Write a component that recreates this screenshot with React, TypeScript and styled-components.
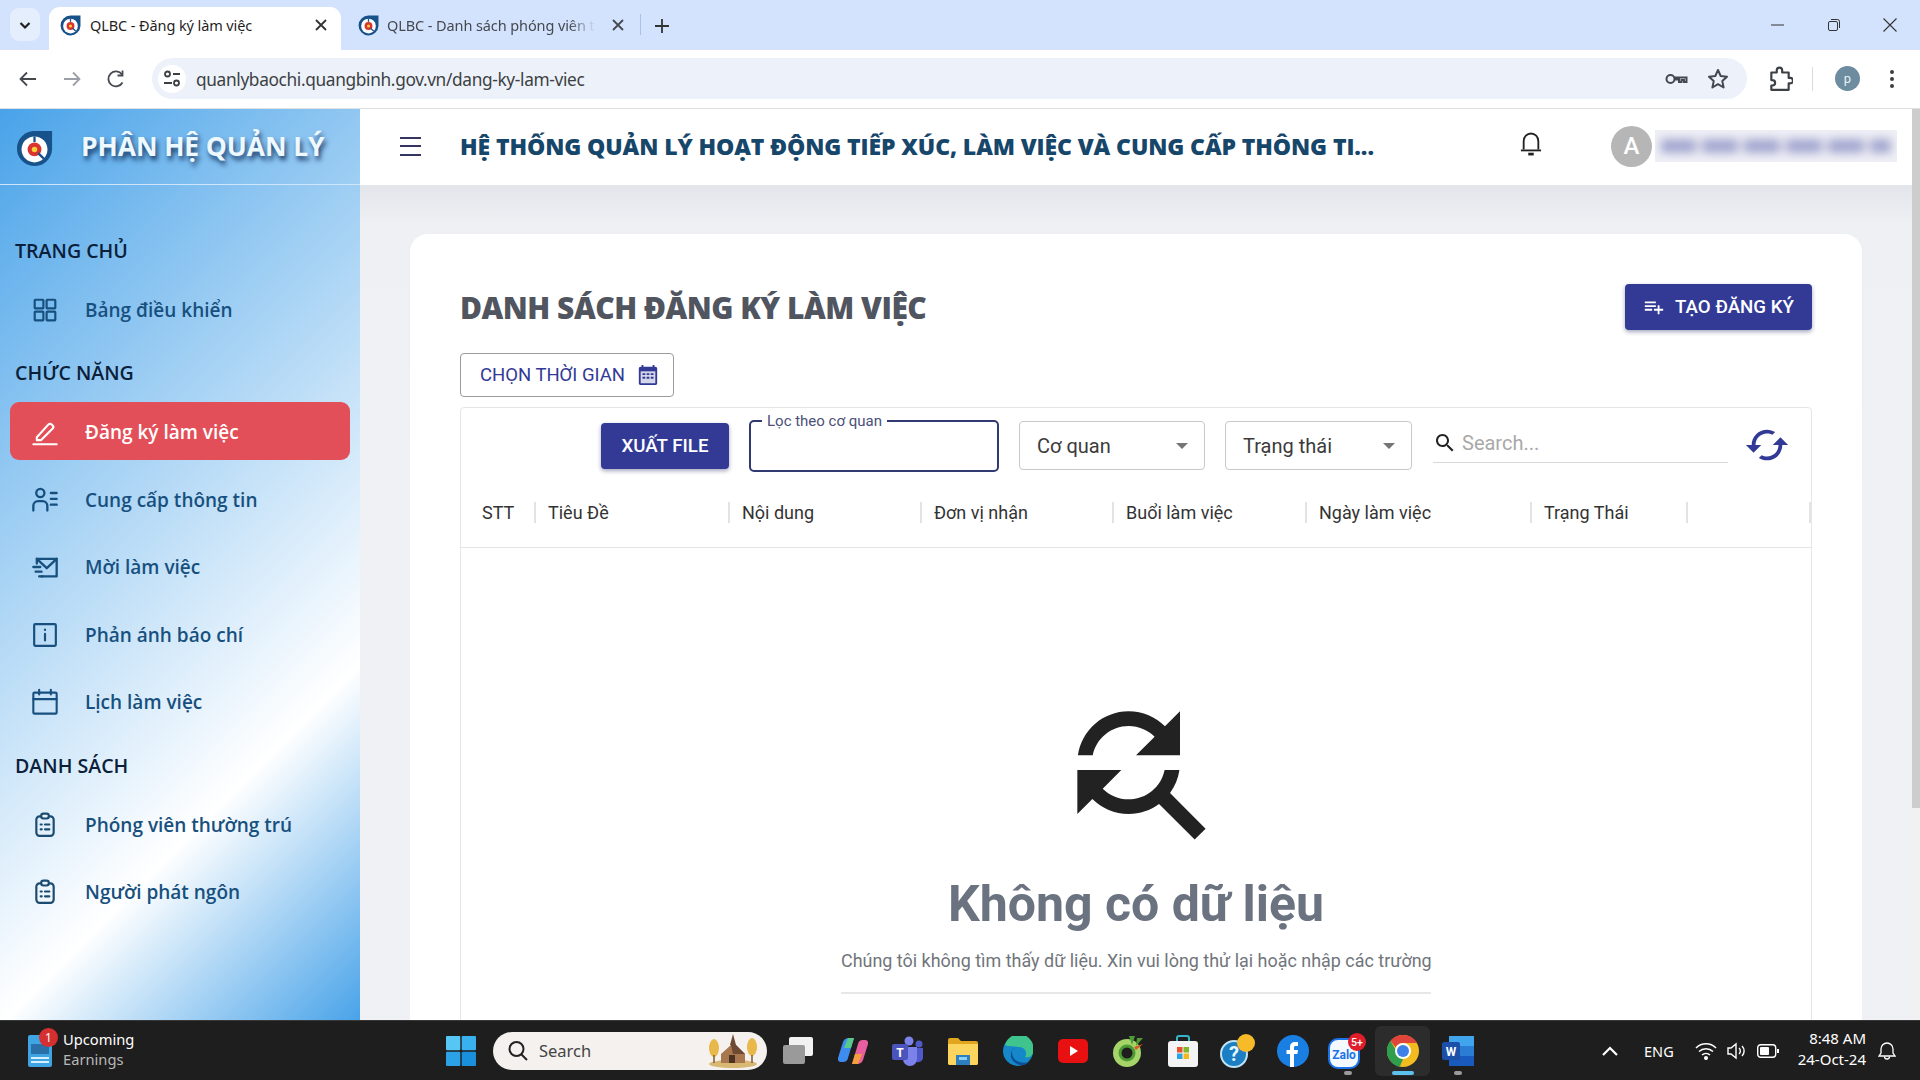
import React from "react";
import styled, { createGlobalStyle } from "styled-components";

const GlobalStyle = createGlobalStyle`
  html, body { margin: 0; height: 100%; overflow: hidden; background: #fff; }
  #root { height: 100%; }
  * { box-sizing: border-box; }
  body { font-family: Roboto, "Liberation Sans", sans-serif; }
`;

const Screen = styled.div`
  display: flex;
  flex-direction: column;
  width: 1920px;
  height: 1080px;
`;

/* ---------- browser chrome ---------- */
const TabStrip = styled.div`
  height: 50px;
  flex: none;
  display: flex;
  align-items: flex-end;
  background: #d3e3fd;
  padding-left: 10px;
  font-family: "Noto Sans", "Open Sans", sans-serif;
`;
const TabListButton = styled.div`
  width: 30px;
  height: 33px;
  margin: 0 9px 9px 0;
  border-radius: 9px;
  background: #e4eefd;
  display: flex;
  align-items: center;
  justify-content: center;
`;
const ActiveTab = styled.div`
  width: 292px;
  height: 43px;
  border-radius: 11px 11px 0 0;
  background: #fff;
  display: flex;
  align-items: center;
  padding: 0 14px 7px 11px;
  gap: 9px;
  color: #1f1f1f;
`;
const InactiveTab = styled.div`
  width: 299px;
  height: 43px;
  display: flex;
  align-items: center;
  padding: 0 16px 7px 17px;
  gap: 8px;
  color: #45494f;
`;
const TabTitle = styled.span`
  flex: 1;
  font-size: 14.5px;
  white-space: nowrap;
  letter-spacing: -0.1px;
`;
const TabFade = styled(TabTitle)`
  -webkit-mask-image: linear-gradient(to right, #000 84%, transparent 96%);
  mask-image: linear-gradient(to right, #000 84%, transparent 96%);
`;
const TabSeparator = styled.div`
  width: 1px;
  height: 21px;
  margin-bottom: 15px;
  background: #a9c1e4;
`;
const NewTab = styled.div`
  margin: 0 0 16px 13px;
  display: flex;
`;
const WindowControls = styled.div`
  margin-left: auto;
  align-self: flex-start;
  display: flex;
  padding: 17px 22px 0 0;
  gap: 40px;
`;
const ToolBar = styled.div`
  height: 59px;
  flex: none;
  display: flex;
  align-items: center;
  background: #fff;
  border-bottom: 1px solid #dfe1e5;
  padding: 0 14px 1px 16px;
`;
const NavIcons = styled.div`
  display: flex;
  gap: 20px;
  width: 136px;
  flex: none;
`;
const Omnibox = styled.div`
  width: 1595px;
  height: 41px;
  flex: none;
  border-radius: 21px;
  background: #edf2fa;
  display: flex;
  align-items: center;
  padding: 0 17px 0 6px;
`;
const TuneChip = styled.div`
  width: 28px;
  height: 28px;
  border-radius: 50%;
  background: #fff;
  display: flex;
  align-items: center;
  justify-content: center;
  margin-right: 10px;
`;
const UrlText = styled.span`
  flex: 1;
  padding-top: 2px;
  font-size: 17.3px;
  color: #3c4043;
  font-family: "Noto Sans", sans-serif;
  letter-spacing: -0.35px;
`;
const OmniIcons = styled.div`
  display: flex;
  align-items: center;
  gap: 18px;
`;
const ToolRight = styled.div`
  display: flex;
  align-items: center;
  margin-left: 20px;
`;
const ToolDivider = styled.div`
  width: 1px;
  height: 24px;
  background: #d8dce2;
  margin: 0 22px 0 19px;
`;
const ProfileChip = styled.div`
  width: 25px;
  height: 25px;
  border-radius: 50%;
  background: #6d8c9f;
  color: #eaf1f5;
  font-size: 13px;
  display: flex;
  align-items: center;
  justify-content: center;
  margin-right: 29px;
`;

/* ---------- application ---------- */
const Workspace = styled.div`
  flex: 1;
  min-height: 0;
  display: flex;
  overflow: hidden;
`;
const Sidebar = styled.aside`
  width: 360px;
  flex: none;
  background: linear-gradient(135deg, #49a3e9 0%, #ffffff 72%, #49a3e9 100%);
  font-family: "Open Sans", "Noto Sans", sans-serif;
`;
const Brand = styled.div`
  height: 76px;
  display: flex;
  align-items: center;
  gap: 28px;
  padding: 0 0 2px 16px;
  border-bottom: 1px solid #cfe6fa;
`;
const BrandLogo = styled.span`
  display: flex;
  margin-top: 6px;
`;
const BrandName = styled.span`
  font-size: 26.5px;
  font-weight: 700;
  color: #eef8ff;
  white-space: nowrap;
  letter-spacing: -0.1px;
  text-shadow: 2px 4px 5px rgba(0, 28, 70, 0.8);
`;
const SideNav = styled.nav`
  display: flex;
  flex-direction: column;
  padding: 45px 10px 0;
`;
const SectionLabel = styled.div<{ $top?: number }>`
  height: 40px;
  display: flex;
  align-items: center;
  padding-left: 5px;
  font-size: 19.6px;
  font-weight: 600;
  color: #0b1f3a;
  margin-top: ${(p) => p.$top ?? 0}px;
  white-space: nowrap;
`;
const NavItem = styled.div<{ $active?: boolean; $gap?: number }>`
  height: 58px;
  display: flex;
  align-items: center;
  gap: 24px;
  padding: ${(p) => (p.$active ? "2px" : "0")} 0 0 18px;
  margin-top: ${(p) => p.$gap ?? 0}px;
  border-radius: 9px;
  font-size: 19px;
  font-weight: 600;
  color: ${(p) => (p.$active ? "#fff" : "#17507e")};
  background: ${(p) => (p.$active ? "#e34f59" : "transparent")};
  white-space: nowrap;
`;
const NavIconSlot = styled.span`
  width: 33px;
  height: 33px;
  flex: none;
  display: flex;
  align-items: center;
  justify-content: center;
`;
const Main = styled.main`
  flex: 1;
  min-width: 0;
  display: flex;
  flex-direction: column;
`;
const Header = styled.header`
  height: 76px;
  flex: none;
  display: flex;
  align-items: center;
  background: #fff;
  padding: 0 0 2px 40px;
`;
const Burger = styled.div`
  width: 21px;
  height: 19px;
  flex: none;
  margin-right: 39px;
  display: flex;
  flex-direction: column;
  justify-content: space-between;
  & > i {
    display: block;
    height: 2px;
    background: #34365e;
  }
`;
const HeaderTitle = styled.h1`
  width: 1060px;
  flex: none;
  margin: 0;
  font-family: "Open Sans", "Noto Sans", sans-serif;
  font-size: 23px;
  font-weight: 800;
  color: #17466b;
  white-space: nowrap;
  letter-spacing: -0.1px;
`;
const BellSlot = styled.div`
  width: 91px;
  flex: none;
  display: flex;
  margin-bottom: 4px;
`;
const Avatar = styled.div`
  width: 41px;
  height: 41px;
  flex: none;
  border-radius: 50%;
  background: #b6b6b6;
  color: #fff;
  font-size: 24px;
  font-weight: 500;
  display: flex;
  align-items: center;
  justify-content: center;
  margin-right: 3px;
`;
const BlurredName = styled.div`
  width: 242px;
  height: 32px;
  flex: none;
  background: #eff0f6;
  display: flex;
  align-items: center;
  overflow: hidden;
  & > i {
    display: block;
    width: 100%;
    height: 14px;
    margin: 0 6px;
    filter: blur(5px);
    background: repeating-linear-gradient(to right, #a4a7d0 0 34px, #dcdcea 34px 42px);
  }
`;
const Content = styled.div`
  flex: 1;
  min-height: 0;
  background: linear-gradient(to bottom, #e2e5ea 0, #eef0f4 40px, #eff1f5 100%);
  padding: 49px 50px 0;
  overflow: hidden;
`;
const Card = styled.section`
  background: #fff;
  border-radius: 18px;
  padding: 50px 50px 40px;
  height: 1100px;
`;
const TitleRow = styled.div`
  height: 46px;
  display: flex;
  align-items: center;
  justify-content: space-between;
`;
const PageTitle = styled.h2`
  margin: 0;
  font-family: "Open Sans", "Noto Sans", sans-serif;
  font-size: 30px;
  font-weight: 800;
  color: #50555f;
  letter-spacing: -0.5px;
`;
const PrimaryButton = styled.button<{ $w: number }>`
  width: ${(p) => p.$w}px;
  height: 46px;
  flex: none;
  border: 0;
  border-radius: 4px;
  background: #323a96;
  color: #fff;
  font: 500 18.7px Roboto, sans-serif;
  display: flex;
  align-items: center;
  justify-content: center;
  gap: 10px;
  box-shadow: 0 2px 4px rgba(30, 35, 90, 0.4);
`;
const DateButton = styled.button`
  width: 214px;
  height: 44px;
  margin-top: 23px;
  border: 1px solid #9b9b9b;
  border-radius: 4px;
  background: #fff;
  color: #323a96;
  font: 400 18.5px Roboto, sans-serif;
  display: flex;
  align-items: center;
  justify-content: center;
  gap: 12px;
  padding: 0 0 0 5px;
`;
const TablePanel = styled.div`
  margin-top: 10px;
  border: 1px solid #e6e6e6;
  border-radius: 4px;
  height: 900px;
`;
const FilterRow = styled.div`
  display: flex;
  align-items: flex-start;
  gap: 20px;
  padding: 15px 0 0 140px;
  height: 73px;
`;
const FieldOutline = styled.fieldset`
  width: 250px;
  height: 59px;
  margin: -10px 0 0;
  padding: 0 0 0 11px;
  border: 2px solid #323a72;
  border-radius: 5px;
  flex: none;
`;
const FieldLegend = styled.legend`
  padding: 0 5px;
  font-size: 15px;
  line-height: 16px;
  color: #4b5078;
`;
const SelectBox = styled.div<{ $w: number }>`
  width: ${(p) => p.$w}px;
  height: 49px;
  flex: none;
  margin-top: -2px;
  border: 1px solid #c9c9c9;
  border-radius: 4px;
  display: flex;
  align-items: center;
  justify-content: space-between;
  padding: 0 16px 0 17px;
  font-size: 20px;
  color: #3b3b3b;
`;
const Caret = styled.span`
  width: 0;
  height: 0;
  border-left: 6px solid transparent;
  border-right: 6px solid transparent;
  border-top: 6px solid #757575;
`;
const SearchBox = styled.div`
  width: 295px;
  height: 40px;
  flex: none;
  margin-left: 1px;
  border-bottom: 1px solid #d8d8d8;
  display: flex;
  align-items: center;
  gap: 5px;
  font-size: 20px;
  color: #a9a9a9;
`;
const RefreshSlot = styled.div`
  flex: none;
  margin: -1px 0 0 -4px;
  display: flex;
`;
const HeadRow = styled.div`
  display: grid;
  grid-template-columns: 73px 194px 192px 192px 193px 225px 156px 123px 1px;
  align-items: center;
  height: 67px;
  padding-bottom: 4px;
  border-bottom: 1px solid #e4e4e4;
  font-size: 18px;
  color: #333;
`;
const HeadCell = styled.div<{ $plain?: boolean }>`
  height: 21px;
  line-height: 21px;
  white-space: nowrap;
  border-left: ${(p) => (p.$plain ? "0" : "2px solid #e3e3e3")};
  padding-left: ${(p) => (p.$plain ? 21 : 12)}px;
`;
const EmptyState = styled.div`
  display: flex;
  flex-direction: column;
  align-items: center;
  padding-top: 134px;
`;
const EmptyTitle = styled.div`
  margin-top: 18px;
  font-size: 50px;
  font-weight: 700;
  line-height: 56px;
  color: #6b7280;
`;
const EmptyText = styled.div`
  width: 590px;
  margin-top: 17px;
  padding-bottom: 19px;
  border-bottom: 2px solid #e7e7e7;
  font-size: 17.95px;
  line-height: 24px;
  color: #71757b;
  text-align: center;
  white-space: nowrap;
`;
const ScrollTrack = styled.div`
  width: 8px;
  flex: none;
  background: #f1f1f1;
  & > i {
    display: block;
    height: 699px;
    background: #cdcdcd;
  }
`;

/* ---------- taskbar ---------- */
const Taskbar = styled.footer`
  height: 60px;
  flex: none;
  background: #1f1e1e;
  border-top: 1px solid #383838;
  display: flex;
  align-items: center;
  color: #fff;
  font-family: "Noto Sans", "Open Sans", sans-serif;
`;
const Widget = styled.div`
  width: 446px;
  flex: none;
  padding-left: 28px;
  display: flex;
  align-items: center;
  gap: 11px;
`;
const WidgetIcon = styled.div`
  position: relative;
  width: 24px;
  height: 32px;
  flex: none;
  display: flex;
`;
const Badge = styled.span`
  position: absolute;
  top: -7px;
  left: 11px;
  width: 19px;
  height: 19px;
  border-radius: 50%;
  background: #d62f2f;
  font-size: 12px;
  display: flex;
  align-items: center;
  justify-content: center;
`;
const WidgetText = styled.div`
  font-size: 14.7px;
  line-height: 20px;
  margin-bottom: 4px;
  & > small {
    display: block;
    font-size: 14.7px;
    color: #b8b8b8;
  }
`;
const SearchPill = styled.div`
  width: 274px;
  height: 38px;
  flex: none;
  margin: 0 3px 0 17px;
  border-radius: 19px;
  background: #f4f1ee;
  color: #444;
  font-size: 16.5px;
  display: flex;
  align-items: center;
  gap: 10px;
  padding: 0 7px 0 14px;
  & > span {
    flex: 1;
  }
`;
const TaskIcon = styled.div<{ $active?: boolean; $dot?: boolean; $bar?: boolean }>`
  position: relative;
  width: 55px;
  height: 50px;
  flex: none;
  display: flex;
  align-items: center;
  justify-content: center;
  border-radius: 6px;
  background: ${(p) => (p.$active ? "#2c2c2c" : "transparent")};
  &::after {
    content: "";
    display: ${(p) => (p.$dot || p.$bar ? "block" : "none")};
    position: absolute;
    bottom: 1px;
    left: 50%;
    transform: translateX(-50%);
    width: ${(p) => (p.$bar ? 22 : 8)}px;
    height: 4px;
    border-radius: 2px;
    background: ${(p) => (p.$bar ? "#5cc1ec" : "#9a9a9a")};
  }
`;
const Tray = styled.div`
  margin-left: auto;
  display: flex;
  align-items: center;
  padding-right: 24px;
  font-size: 14.5px;
`;
const Lang = styled.span`
  margin: 0 21px 0 25px;
`;
const TrayIcons = styled.div`
  display: flex;
  align-items: center;
  gap: 10px;
  margin-right: 19px;
`;
const Clock = styled.div`
  text-align: right;
  font-size: 15px;
  line-height: 21px;
  margin: 0 12px 3px 0;
`;

/* ---------- drawings ---------- */
const Logo = ({ s }: { s: number }) => (
  <svg width={s} height={s} viewBox="0 0 40 40">
    <path d="M20 1h19v20a19 19 0 1 1-19-20z" fill="#17528a" />
    <circle cx="20" cy="21" r="14" fill="#fff" />
    <circle cx="20" cy="21" r="7.500" fill="#d9342f" />
    <path d="M20 7v6" stroke="#17528a" strokeWidth="2.500" />
    <circle cx="20" cy="21" r="3" fill="#f6cf3a" />
    <path d="M24 25l6 6" stroke="#17528a" strokeWidth="2.500" />
  </svg>
);
const Mat = ({ d, s, c }: { d: string; s: number; c: string }) => (
  <svg width={s} height={s} viewBox="0 0 24 24" fill={c}>
    <path d={d} />
  </svg>
);
const Line = ({ s, c = "#17507e", w = 2, children, vb = 24 }: { s: number; c?: string; w?: number; children: React.ReactNode; vb?: number }) => (
  <svg width={s} height={s} viewBox={`0 0 ${vb} ${vb}`} fill="none" stroke={c} strokeWidth={w} strokeLinecap="round" strokeLinejoin="round">
    {children}
  </svg>
);
const M = {
  search: "M15.5 14h-.79l-.28-.27C15.41 12.590 16 11.110 16 9.500 16 5.910 13.090 3 9.500 3S3 5.910 3 9.500 5.910 16 9.500 16c1.610 0 3.090-.59 4.230-1.570l.27.28v.79l5 4.990L20.490 19l-4.990-5zm-6 0C7.010 14 5 11.990 5 9.500S7.010 5 9.500 5 14 7.010 14 9.500 11.990 14 9.500 14z",
  playlist: "M14 10H2v2h12v-2zm0-4H2v2h12V6zm4 8v-4h-2v4h-4v2h4v4h2v-4h4v-2h-4zM2 16h8v-2H2v2z",
  cached: "M19 8l-4 4h3c0 3.310-2.690 6-6 6-1.010 0-1.970-.25-2.800-.7l-1.460 1.460C8.970 19.540 10.430 20 12 20c4.420 0 8-3.580 8-8h3l-4-4zM6 12c0-3.310 2.690-6 6-6 1.010 0 1.970.25 2.800.7l1.460-1.460C15.030 4.460 13.570 4 12 4c-4.420 0-8 3.580-8 8H1l4 4 4-4H6z",
  find: "M11 6c1.380 0 2.630.56 3.540 1.460L12 10h6V4l-2.050 2.050C14.680 4.780 12.930 4 11 4c-3.530 0-6.430 2.610-6.920 6H6.100c.46-2.280 2.480-4 4.900-4zm5.640 9.140c.66-.9 1.120-1.970 1.280-3.140H15.900c-.46 2.280-2.480 4-4.900 4-1.380 0-2.630-.56-3.540-1.460L10 12H4v6l2.050-2.050C7.320 17.220 9.070 18 11 18c1.550 0 2.980-.51 4.140-1.360L20 21.490 21.490 20l-4.850-4.860z",
};
const CalendarFilled = () => (
  <svg width="22" height="24" viewBox="0 0 24 24" fill="#323a96">
    <path d="M20 3h-1V1h-2v2H7V1H5v2H4c-1.100 0-2 .9-2 2v16c0 1.100.9 2 2 2h16c1.100 0 2-.9 2-2V5c0-1.100-.9-2-2-2z" />
    <path d="M4 8h16v13H4z" fill="#fff" opacity=".8" />
    <path d="M6 10h3v2H6zm4.500 0h3v2h-3zm4.500 0h3v2h-3zM6 14h3v2H6zm4.500 0h3v2h-3zm4.500 0h3v2h-3z" />
  </svg>
);
const IconGrid = () => (
  <Line s={26}>
    <rect x="2.500" y="2.500" width="8" height="8" rx=".5" /><rect x="13.500" y="2.500" width="8" height="8" rx=".5" />
    <rect x="2.500" y="13.500" width="8" height="8" rx=".5" /><rect x="13.500" y="13.500" width="8" height="8" rx=".5" />
  </Line>
);
const IconPen = () => (
  <Line s={28} c="#fff" w={1.800}>
    <path d="M5 16.500L15 5.500a1.800 1.800 0 0 1 2.600 0l1 1a1.800 1.800 0 0 1 0 2.500L8.500 19H5z" /><path d="M2 22.500h20" />
  </Line>
);
const IconPersonList = () => (
  <Line s={28}>
    <circle cx="8" cy="6" r="3.500" /><path d="M2 21v-4a4 4 0 0 1 4-4h4a4 4 0 0 1 4 4v4" /><path d="M17 6h5M17 11h5M17 16h5" />
  </Line>
);
const IconMail = () => (
  <Line s={28}>
    <path d="M5 9V5h17v15H9" /><path d="M5 5l8.500 8L22 5" /><path d="M2 12h6M4 16h5M7 20h3" />
  </Line>
);
const IconInfo = () => (
  <Line s={26}>
    <rect x="2" y="2" width="20" height="20" rx="1" /><path d="M12 11v6" /><path d="M12 7v.4" />
  </Line>
);
const IconCal = () => (
  <Line s={28} w={1.800}>
    <rect x="2" y="4" width="20" height="18" rx="1" /><path d="M2 9.500h20M7 1.500v4M17 1.500v4" />
  </Line>
);
const IconClip = () => (
  <Line s={26} c="#1b4b70">
    <rect x="4" y="4" width="16" height="18" rx="3" /><rect x="8.500" y="1.500" width="7" height="4.500" rx="2" fill="#e8f2fb" />
    <path d="M8 11.500h1M12 11.500h4M8 16h1M12 16h4" />
  </Line>
);
const Bell = () => (
  <svg width="22" height="28" viewBox="0 0 24 28" fill="none" stroke="#222" strokeWidth="2">
    <path d="M4 20V11a8 8.500 0 0 1 16 0v9" /><path d="M1 21h22" /><path d="M9 25h6" strokeWidth="3" />
  </svg>
);
const Chevron = () => (
  <svg width="14" height="14" viewBox="0 0 14 14" fill="none" stroke="#1f1f1f" strokeWidth="2.200"><path d="M2.500 5l4.500 4.500L11.500 5" /></svg>
);
const CloseX = ({ c = "#333" }: { c?: string }) => (
  <svg width="12" height="12" viewBox="0 0 12 12" stroke={c} strokeWidth="1.800"><path d="M1 1l10 10M11 1L1 11" /></svg>
);
const WinMin = () => <svg width="16" height="16" viewBox="0 0 16 16" stroke="#333"><path d="M1 8h13" /></svg>;
const WinRestore = () => (
  <svg width="16" height="16" viewBox="0 0 16 16" fill="none" stroke="#333"><rect x="2.500" y="4.500" width="9" height="9" rx="1.500" /><path d="M5 2.500h6.500a2 2 0 0 1 2 2V11" /></svg>
);
const WinClose = () => <svg width="16" height="16" viewBox="0 0 16 16" stroke="#333" strokeWidth="1.100"><path d="M1.500 1.500l13 13M14.500 1.500l-13 13" /></svg>;
const ArrowNav = ({ c, flip }: { c: string; flip?: boolean }) => (
  <svg width="24" height="24" viewBox="0 0 24 24" fill="none" stroke={c} strokeWidth="1.800" style={flip ? { transform: "scaleX(-1)" } : undefined}>
    <path d="M20 12H5M11 5.500L4.500 12l6.500 6.500" />
  </svg>
);
const Reload = () => (
  <svg width="24" height="24" viewBox="0 0 24 24" fill="none" stroke="#45494f" strokeWidth="1.800"><path d="M18.500 15.500A7.500 7.500 0 1 1 18 7.500" /><path d="M18.500 3.500v5h-5" /></svg>
);
const Tune = () => (
  <svg width="20" height="20" viewBox="0 0 20 20" fill="none" stroke="#3c4043" strokeWidth="1.800"><circle cx="5.500" cy="5" r="2.500" /><path d="M11 5h7M2 14h8" /><circle cx="14.500" cy="14" r="2.500" /></svg>
);
const KeyIcon = () => (
  <svg width="24" height="24" viewBox="0 0 24 24" fill="none" stroke="#45494f" strokeWidth="2"><circle cx="6.500" cy="12" r="4" /><path d="M10.500 10.500h12V15h-2.500v-2h-2.500v2H15v-2.500h-4.500" /></svg>
);
const Star = () => (
  <svg width="24" height="24" viewBox="0 0 24 24" fill="none" stroke="#45494f" strokeWidth="2" strokeLinejoin="round"><path d="M12 3l2.700 6 6.300.7-4.700 4.400 1.300 6.400-5.600-3.300-5.600 3.300 1.300-6.400L3 9.700 9.300 9z" /></svg>
);
const Puzzle = () => (
  <svg width="26" height="26" viewBox="0 0 24 24" fill="none" stroke="#3c4043" strokeWidth="2" strokeLinejoin="round"><path d="M4 6h5V4a2.500 2.500 0 0 1 5 0v2h6v5h1.500a2.500 2.500 0 0 1 0 5H20v6H4v-4h1a2.500 2.500 0 0 0 0-5H4z" /></svg>
);
const Dots = () => (
  <svg width="6" height="24" viewBox="0 0 6 24" fill="#3c4043"><circle cx="3" cy="5" r="2" /><circle cx="3" cy="12" r="2" /><circle cx="3" cy="19" r="2" /></svg>
);
const WidgetDoc = () => (
  <svg width="24" height="32" viewBox="0 0 24 32"><rect width="24" height="32" rx="2" fill="#3ea4e4" /><rect x="3" y="9" width="18" height="10" fill="#2b6fa8" /><path d="M3 22h18v2H3zM3 26h18v2H3z" fill="#d8f0fc" /></svg>
);
const WinLogo = () => (
  <svg width="30" height="30" viewBox="0 0 30 30"><rect width="14.300" height="14.300" rx="1" fill="#56c6f4" /><rect x="15.700" width="14.300" height="14.300" rx="1" fill="#39b1ee" /><rect y="15.700" width="14.300" height="14.300" rx="1" fill="#2ba2e6" /><rect x="15.700" y="15.700" width="14.300" height="14.300" rx="1" fill="#1a8fdc" /></svg>
);
const Chapel = () => (
  <svg width="54" height="36" viewBox="0 0 54 36">
    <ellipse cx="27" cy="31" rx="24" ry="4" fill="#d9b873" />
    <ellipse cx="8" cy="15" rx="5" ry="9" fill="#e8b84a" /><path d="M8 22v8" stroke="#7b5a32" strokeWidth="1.500" />
    <ellipse cx="46" cy="14" rx="5" ry="9" fill="#e8b84a" /><path d="M46 22v8" stroke="#7b5a32" strokeWidth="1.500" />
    <path d="M27 1l3 11h-6z" fill="#6f4a32" /><path d="M15 21l10-9h5l9 9v9H15z" fill="#a8764f" /><path d="M25 12h5l9 9H27z" fill="#6f4a32" /><rect x="23" y="22" width="6" height="8" fill="#4d3222" />
  </svg>
);
const WindowShot = () => (
  <svg width="30" height="28" viewBox="0 0 30 28"><rect x="6" width="24" height="19" rx="2" fill="#f2f2f2" /><rect y="8" width="22" height="19" rx="2" fill="#9a9a9a" /></svg>
);
const Copilot = () => (
  <svg width="30" height="30" viewBox="0 0 30 30">
    <path d="M10 2h6l-6 20a5 5 0 0 1-5 4H3a3 3 0 0 1-3-4l5-16a6 6 0 0 1 5-4z" fill="#3d8cf0" />
    <path d="M20 28h-6l6-20a5 5 0 0 1 5-4h2a3 3 0 0 1 3 4l-5 16a6 6 0 0 1-5 4z" fill="#e85fa0" />
    <path d="M10 2h6l-3 10H6z" fill="#59c98a" /><path d="M14 28h6l4-10h-7z" fill="#f3a03c" />
  </svg>
);
const Teams = () => (
  <svg width="32" height="30" viewBox="0 0 32 30">
    <circle cx="17" cy="5" r="4.500" fill="#7b83eb" /><circle cx="27" cy="8" r="3.500" fill="#5059c9" />
    <path d="M22 12h9v10a5 5 0 0 1-9 2z" fill="#5059c9" /><path d="M9 11h16v12a7 7 0 0 1-14 0z" fill="#7b83eb" />
    <rect y="8" width="16" height="16" rx="2" fill="#4b53bc" />
    <text x="8" y="20.500" textAnchor="middle" fontSize="12" fontWeight="700" fill="#fff" fontFamily="Roboto">T</text>
  </svg>
);
const Folder = () => (
  <svg width="30" height="28" viewBox="0 0 30 28"><path d="M0 3a2 2 0 0 1 2-2h8l3 3h15a2 2 0 0 1 2 2v20a2 2 0 0 1-2 2H2a2 2 0 0 1-2-2z" fill="#e0a620" /><path d="M0 7h30v19a2 2 0 0 1-2 2H2a2 2 0 0 1-2-2z" fill="#fcd55f" /><rect x="8" y="18" width="14" height="10" fill="#2d7fc0" /><rect x="11" y="20" width="8" height="3" fill="#8ad0f4" /></svg>
);
const Edge = () => (
  <svg width="30" height="30" viewBox="0 0 30 30">
    <circle cx="15" cy="15" r="15" fill="#1688c9" /><path d="M2 9a14 14 0 0 1 28 7c0 4-4 6-8 5 3-4 0-10-6-10-6-1-11 0-14-2z" fill="#3fc48e" />
    <path d="M9 16c0-3 3-5 7-5-6 0-9 5-8 10 1 4 5 8 11 8 3 0 5-1 7-3-6 2-17 0-17-10z" fill="#0c4f9a" />
  </svg>
);
const YouTube = () => (
  <svg width="30" height="24" viewBox="0 0 30 24"><rect width="30" height="24" rx="5" fill="#e81010" /><path d="M12 7l8 5-8 5z" fill="#fff" /></svg>
);
const CocCoc = () => (
  <svg width="30" height="32" viewBox="0 0 30 32"><circle cx="14" cy="18" r="14" fill="#a5d469" /><circle cx="14" cy="18" r="7" fill="#1f1e1e" stroke="#4f9a33" strokeWidth="3" /><path d="M16 1h6l-3 9zM24 3h6l-7 8z" fill="#4f9a33" /><path d="M21 12l9-3-7 6z" fill="#d8582a" /></svg>
);
const Store = () => (
  <svg width="30" height="32" viewBox="0 0 30 32">
    <path d="M9 7V3a2 2 0 0 1 2-2h8a2 2 0 0 1 2 2v4" fill="none" stroke="#34b4c8" strokeWidth="2" />
    <rect y="6" width="30" height="26" rx="3" fill="#f4f4f4" />
    <rect x="9" y="12" width="5.500" height="5.500" fill="#e8532e" /><rect x="15.500" y="12" width="5.500" height="5.500" fill="#7fba2a" /><rect x="9" y="18.500" width="5.500" height="5.500" fill="#2aa4e8" /><rect x="15.500" y="18.500" width="5.500" height="5.500" fill="#f6b91c" />
  </svg>
);
const Help = () => (
  <svg width="36" height="36" viewBox="0 0 36 36">
    <circle cx="14" cy="21" r="13" fill="#1c7fc4" stroke="#bfe3f5" strokeWidth="2" />
    <text x="14" y="28" textAnchor="middle" fontSize="20" fontWeight="700" fill="#e8f6ff" fontFamily="Roboto">?</text>
    <circle cx="26" cy="10" r="9" fill="#f7bb2a" />
  </svg>
);
const Facebook = () => (
  <svg width="32" height="32" viewBox="0 0 32 32"><circle cx="16" cy="16" r="16" fill="#1a7fe3" /><path d="M21 11h-2.500c-1 0-1.500.6-1.500 1.500V15h4l-.6 4H17v13h-4V19H9.500v-4H13v-3c0-3 2-5 5-5h3z" fill="#fff" /></svg>
);
const Zalo = () => (
  <svg width="42" height="36" viewBox="0 0 42 36">
    <rect x="2" y="6" width="30" height="29" rx="9" fill="#f4f8ff" stroke="#1a74e8" strokeWidth="2" />
    <text x="17" y="26" textAnchor="middle" fontSize="12" fontWeight="700" fill="#1a74e8" fontFamily="Roboto">Zalo</text>
    <circle cx="30" cy="9" r="9" fill="#e11d2a" />
    <text x="30" y="13" textAnchor="middle" fontSize="10.500" fontWeight="500" fill="#fff" fontFamily="Roboto">5+</text>
  </svg>
);
const ChromeLogo = () => (
  <svg width="32" height="32" viewBox="0 0 32 32">
    <circle cx="16" cy="16" r="16" fill="#f2bb1f" />
    <path d="M16 0a16 16 0 0 1 13.900 8H16a8 8 0 0 0-7.200 4.500L3.500 5.700A16 16 0 0 1 16 0z" fill="#e0443a" />
    <path d="M3.500 5.700l7 12.300a8 8 0 0 0 5.500 6l-3.200 7.700A16 16 0 0 1 3.500 5.700z" fill="#2f9e4d" />
    <circle cx="16" cy="16" r="8" fill="#fff" /><circle cx="16" cy="16" r="6" fill="#3d80e8" />
  </svg>
);
const Word = () => (
  <svg width="32" height="30" viewBox="0 0 32 30">
    <rect x="7" width="25" height="10" fill="#41a5ee" /><rect x="7" y="10" width="25" height="10" fill="#2b7cd3" /><rect x="7" y="20" width="25" height="10" fill="#185abd" />
    <rect y="6" width="18" height="18" rx="2" fill="#1b4fa8" />
    <text x="9" y="20" textAnchor="middle" fontSize="12" fontWeight="700" fill="#fff" fontFamily="Roboto">W</text>
  </svg>
);
const TrayChevron = () => <svg width="18" height="12" viewBox="0 0 18 12" fill="none" stroke="#fff" strokeWidth="2.200"><path d="M2 10l7-7 7 7" /></svg>;
const Wifi = () => (
  <svg width="22" height="18" viewBox="0 0 22 18" fill="none" stroke="#fff" strokeWidth="1.500"><path d="M1 6a14 14 0 0 1 20 0M4 9.500a10 10 0 0 1 14 0M7 13a6 6 0 0 1 8 0" /><circle cx="11" cy="16" r="1.300" fill="#fff" /></svg>
);
const Speaker = () => (
  <svg width="20" height="18" viewBox="0 0 20 18" fill="none" stroke="#fff" strokeWidth="1.400"><path d="M1 6h3l5-4v14l-5-4H1z" /><path d="M12 6a4 4 0 0 1 0 6M15 4a7 7 0 0 1 0 10" /></svg>
);
const Battery = () => (
  <svg width="22" height="14" viewBox="0 0 22 14"><rect x=".7" y=".7" width="18" height="12.600" rx="3" fill="none" stroke="#fff" strokeWidth="1.400" /><rect x="3" y="3" width="9" height="8" rx="1" fill="#fff" /><rect x="20" y="5" width="2" height="4" fill="#fff" /></svg>
);
const TrayBell = () => (
  <svg width="18" height="20" viewBox="0 0 18 20" fill="none" stroke="#fff" strokeWidth="1.300"><path d="M1 15l2-3V8a6 6 0 0 1 12 0v4l2 3z" /><path d="M6.500 15.500a2.500 2.500 0 0 0 5 0" /></svg>
);
const TaskSearch = () => (
  <svg width="22" height="22" viewBox="0 0 22 22" fill="none" stroke="#222" strokeWidth="2"><circle cx="9.500" cy="9" r="7" /><path d="M14.500 14.500l5.500 5.500" /></svg>
);

const NAV_1 = [
  { label: "Cung cấp thông tin", icon: <IconPersonList />, gap: 11 },
  { label: "Mời làm việc", icon: <IconMail />, gap: 9 },
  { label: "Phản ánh báo chí", icon: <IconInfo />, gap: 10 },
  { label: "Lịch làm việc", icon: <IconCal />, gap: 9 },
];
const HEAD = ["Tiêu Đề", "Nội dung", "Đơn vị nhận", "Buổi làm việc", "Ngày làm việc", "Trạng Thái", "", ""];

export default function App() {
  return (
    <Screen>
      <GlobalStyle />
      <TabStrip>
        <TabListButton><Chevron /></TabListButton>
        <ActiveTab>
          <Logo s={21} />
          <TabTitle>QLBC - Đăng ký làm việc</TabTitle>
          <CloseX />
        </ActiveTab>
        <InactiveTab>
          <Logo s={21} />
          <TabFade>QLBC - Danh sách phóng viên t</TabFade>
          <CloseX c="#45494f" />
        </InactiveTab>
        <TabSeparator />
        <NewTab>
          <svg width="16" height="16" viewBox="0 0 16 16" stroke="#333" strokeWidth="1.800"><path d="M8 1v14M1 8h14" /></svg>
        </NewTab>
        <WindowControls><WinMin /><WinRestore /><WinClose /></WindowControls>
      </TabStrip>
      <ToolBar>
        <NavIcons>
          <ArrowNav c="#45494f" />
          <ArrowNav c="#9aa0a6" flip />
          <Reload />
        </NavIcons>
        <Omnibox>
          <TuneChip><Tune /></TuneChip>
          <UrlText>quanlybaochi.quangbinh.gov.vn/dang-ky-lam-viec</UrlText>
          <OmniIcons><KeyIcon /><Star /></OmniIcons>
        </Omnibox>
        <ToolRight>
          <Puzzle />
          <ToolDivider />
          <ProfileChip>p</ProfileChip>
          <Dots />
        </ToolRight>
      </ToolBar>

      <Workspace>
        <Sidebar>
          <Brand>
            <BrandLogo><Logo s={37} /></BrandLogo>
            <BrandName>PHÂN HỆ QUẢN LÝ</BrandName>
          </Brand>
          <SideNav>
            <SectionLabel>TRANG CHỦ</SectionLabel>
            <NavItem $gap={11}><NavIconSlot><IconGrid /></NavIconSlot>Bảng điều khiển</NavItem>
            <SectionLabel $top={13}>CHỨC NĂNG</SectionLabel>
            <NavItem $gap={10} $active><NavIconSlot><IconPen /></NavIconSlot>Đăng ký làm việc</NavItem>
            {NAV_1.map((n) => (
              <NavItem key={n.label} $gap={n.gap}><NavIconSlot>{n.icon}</NavIconSlot>{n.label}</NavItem>
            ))}
            <SectionLabel $top={14}>DANH SÁCH</SectionLabel>
            <NavItem $gap={11}><NavIconSlot><IconClip /></NavIconSlot>Phóng viên thường trú</NavItem>
            <NavItem $gap={9}><NavIconSlot><IconClip /></NavIconSlot>Người phát ngôn</NavItem>
          </SideNav>
        </Sidebar>

        <Main>
          <Header>
            <Burger><i /><i /><i /></Burger>
            <HeaderTitle>HỆ THỐNG QUẢN LÝ HOẠT ĐỘNG TIẾP XÚC, LÀM VIỆC VÀ CUNG CẤP THÔNG TI...</HeaderTitle>
            <BellSlot><Bell /></BellSlot>
            <Avatar>A</Avatar>
            <BlurredName><i /></BlurredName>
          </Header>
          <Content>
            <Card>
              <TitleRow>
                <PageTitle>DANH SÁCH ĐĂNG KÝ LÀM VIỆC</PageTitle>
                <PrimaryButton $w={187}><Mat d={M.playlist} s={22} c="#fff" />TẠO ĐĂNG KÝ</PrimaryButton>
              </TitleRow>
              <DateButton>CHỌN THỜI GIAN<CalendarFilled /></DateButton>
              <TablePanel>
                <FilterRow>
                  <PrimaryButton $w={128}>XUẤT FILE</PrimaryButton>
                  <FieldOutline><FieldLegend>Lọc theo cơ quan</FieldLegend></FieldOutline>
                  <SelectBox $w={186}>Cơ quan<Caret /></SelectBox>
                  <SelectBox $w={187}>Trạng thái<Caret /></SelectBox>
                  <SearchBox><Mat d={M.search} s={24} c="#222" />Search...</SearchBox>
                  <RefreshSlot><Mat d={M.cached} s={46} c="#323a96" /></RefreshSlot>
                </FilterRow>
                <HeadRow>
                  <HeadCell $plain>STT</HeadCell>
                  {HEAD.map((h, i) => <HeadCell key={i}>{h}</HeadCell>)}
                </HeadRow>
                <EmptyState>
                  <Mat d={M.find} s={176} c="#222" />
                  <EmptyTitle>Không có dữ liệu</EmptyTitle>
                  <EmptyText>Chúng tôi không tìm thấy dữ liệu. Xin vui lòng thử lại hoặc nhập các trường</EmptyText>
                </EmptyState>
              </TablePanel>
            </Card>
          </Content>
        </Main>
        <ScrollTrack><i /></ScrollTrack>
      </Workspace>

      <Taskbar>
        <Widget>
          <WidgetIcon><WidgetDoc /><Badge>1</Badge></WidgetIcon>
          <WidgetText>Upcoming<small>Earnings</small></WidgetText>
        </Widget>
        <WinLogo />
        <SearchPill><TaskSearch /><span>Search</span><Chapel /></SearchPill>
        <TaskIcon><WindowShot /></TaskIcon>
        <TaskIcon><Copilot /></TaskIcon>
        <TaskIcon><Teams /></TaskIcon>
        <TaskIcon><Folder /></TaskIcon>
        <TaskIcon><Edge /></TaskIcon>
        <TaskIcon><YouTube /></TaskIcon>
        <TaskIcon><CocCoc /></TaskIcon>
        <TaskIcon><Store /></TaskIcon>
        <TaskIcon><Help /></TaskIcon>
        <TaskIcon><Facebook /></TaskIcon>
        <TaskIcon $dot><Zalo /></TaskIcon>
        <TaskIcon $active $bar><ChromeLogo /></TaskIcon>
        <TaskIcon $dot><Word /></TaskIcon>
        <Tray>
          <TrayChevron />
          <Lang>ENG</Lang>
          <TrayIcons><Wifi /><Speaker /><Battery /></TrayIcons>
          <Clock>8:48 AM<br />24-Oct-24</Clock>
          <TrayBell />
        </Tray>
      </Taskbar>
    </Screen>
  );
}
